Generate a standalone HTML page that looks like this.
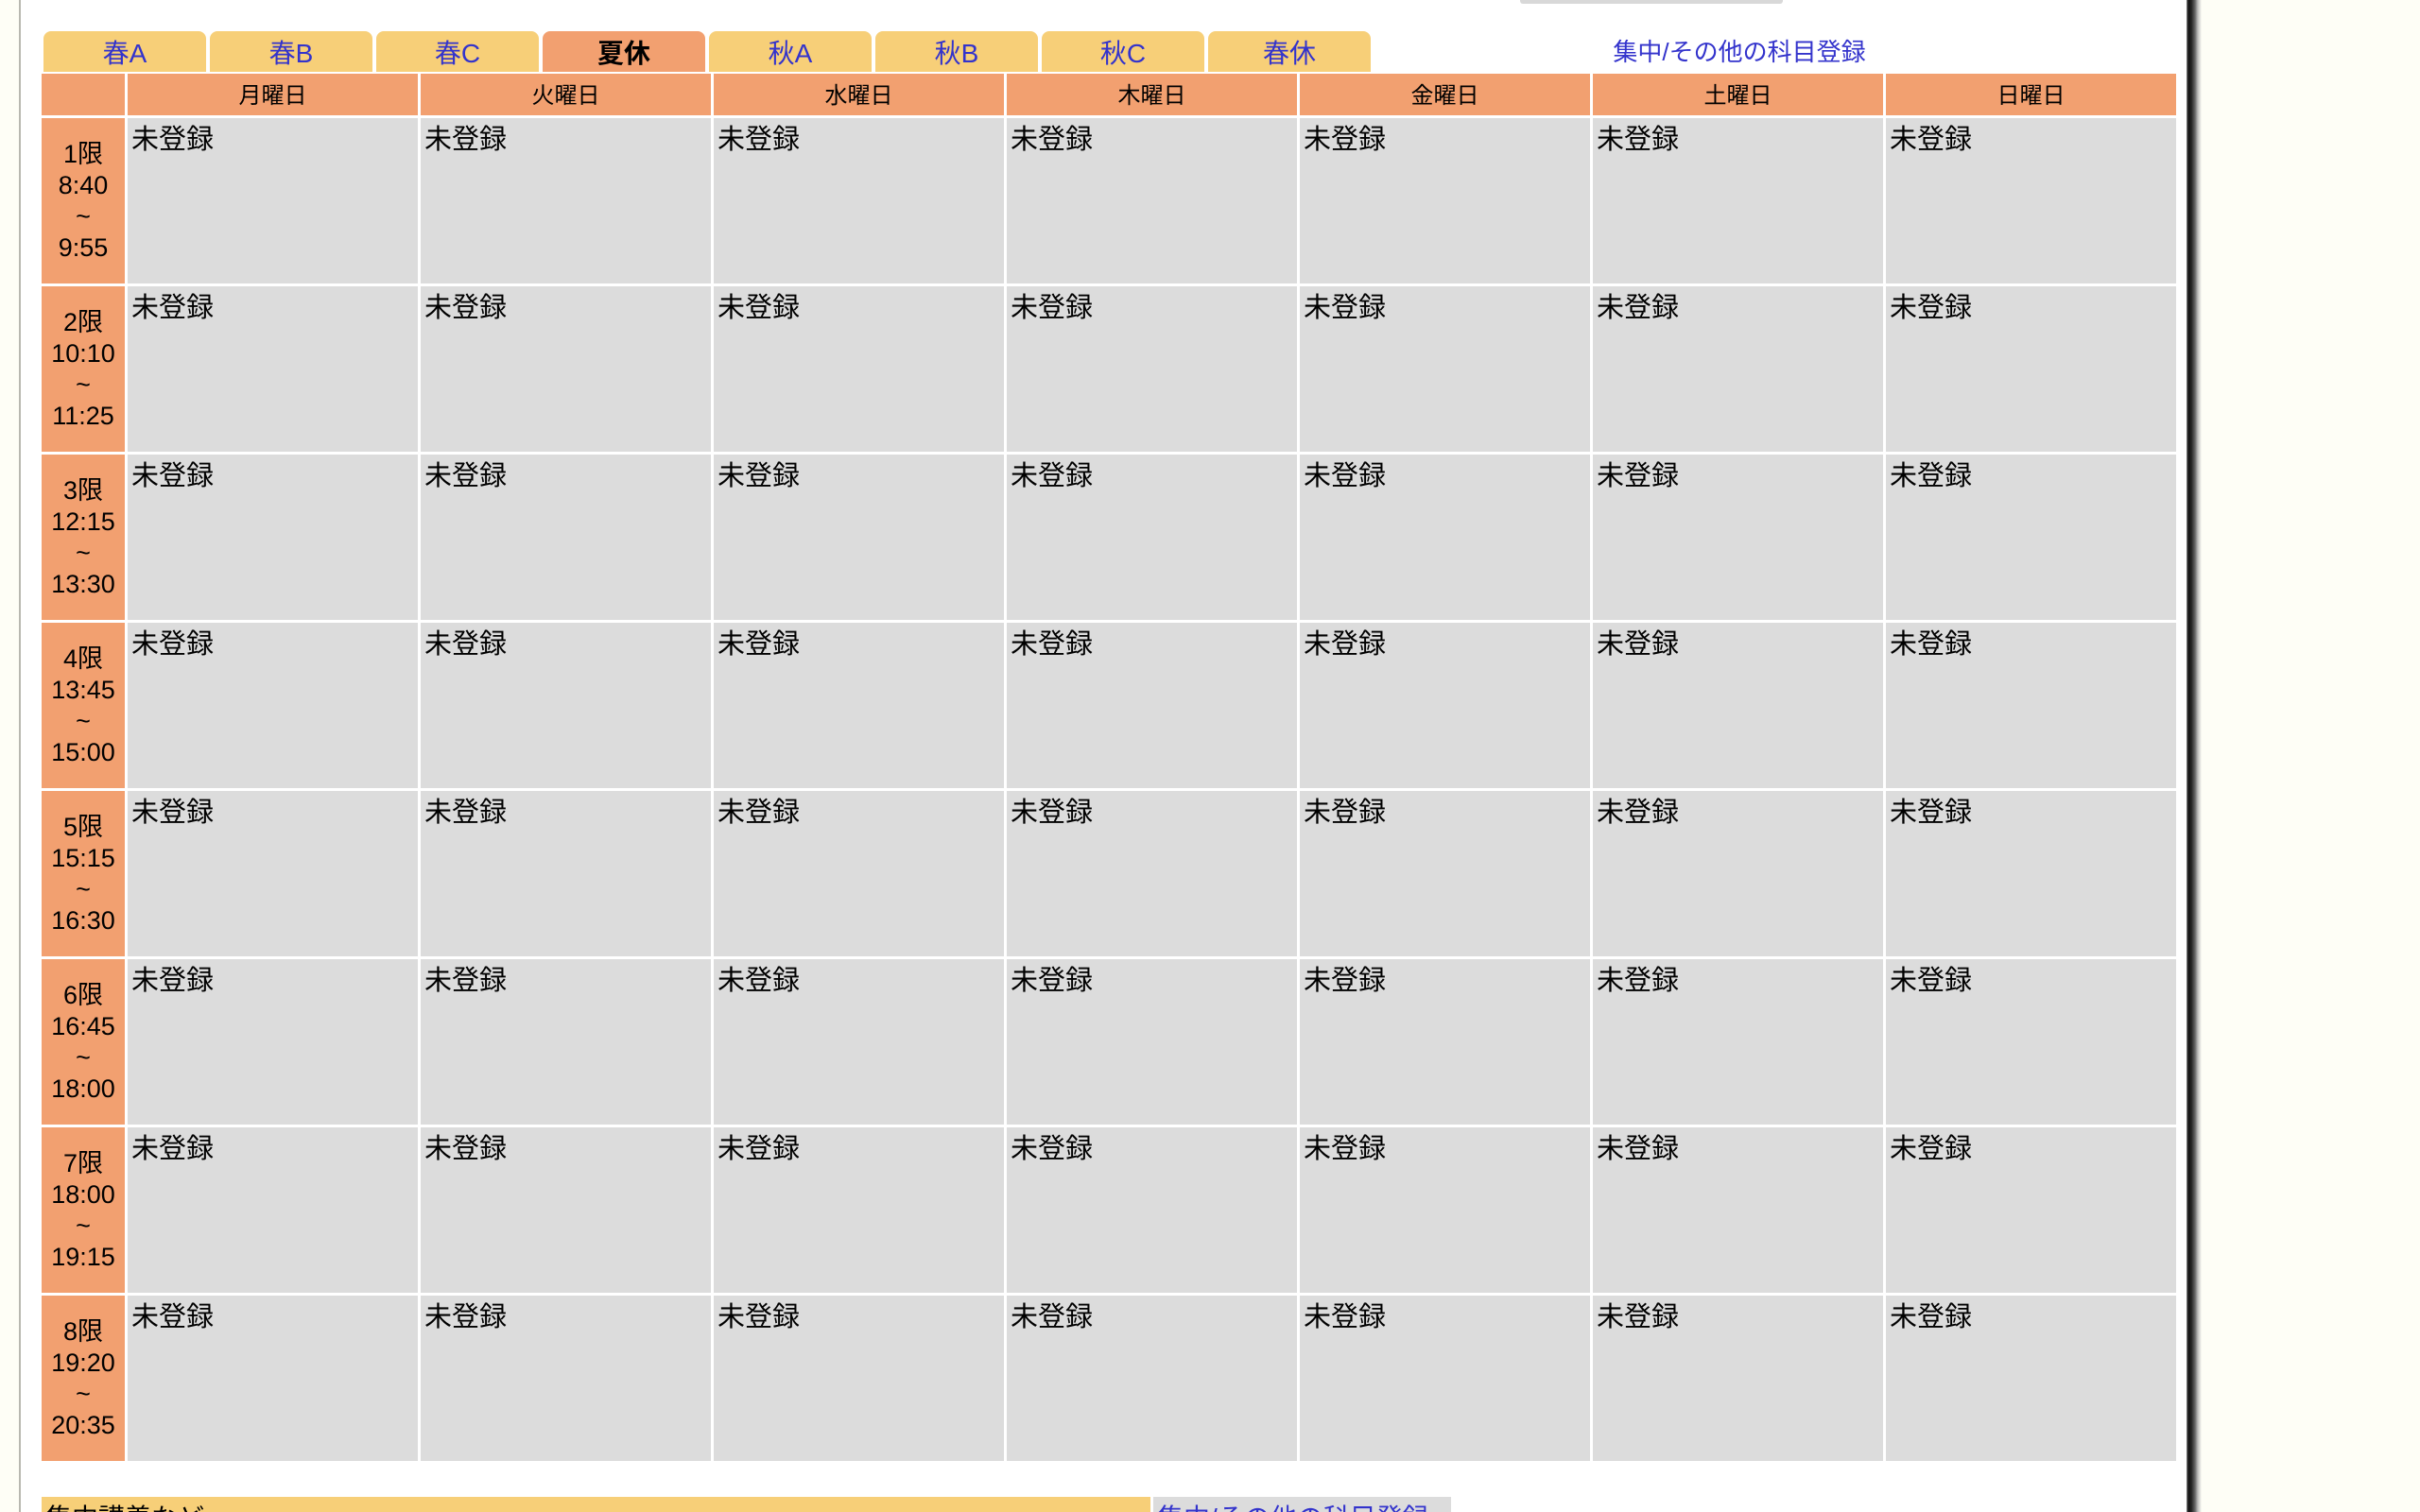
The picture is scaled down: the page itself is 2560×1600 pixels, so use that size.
<!DOCTYPE html>
<html><head><meta charset="utf-8"><style>
*{margin:0;padding:0;box-sizing:border-box}
html,body{width:2560px;height:1600px;overflow:hidden;background:#fefef6;font-family:"Liberation Sans","Noto Sans CJK JP",sans-serif}
#page{position:absolute;left:20px;top:0;width:2293px;height:1600px;background:#fff;border-left:2px solid #b8b8b0}
#shadow{position:absolute;left:2313px;top:0;width:16px;height:1600px;background:linear-gradient(to right,#888 0,#111 2px,#222 5px,#666 9px,#bbb 12px,#fefef6 16px)}
#topbox{position:absolute;left:1608px;top:0;width:278px;height:4px;background:#d8d8d8;border-radius:0 0 3px 3px}
.tab{position:absolute;top:33px;height:43px;width:172px;background:#f7cf78;border-radius:8px 8px 0 0;text-align:center;font-size:28px;line-height:48px;color:#3333cc}
.tab.on{background:#f2a070;color:#000;font-weight:bold}
#link{position:absolute;left:1700px;top:35px;width:280px;text-align:center;font-size:26px;color:#3333cc;line-height:40px}
#grid{position:absolute;left:44px;top:78px;display:grid;grid-template-columns:88px repeat(7,307px);grid-template-rows:44px repeat(8,175px);gap:3px}
.h{background:#f2a070;text-align:center;font-size:24px;line-height:48px;color:#000}
.t{background:#f2a070;text-align:center;font-size:27px;line-height:33px;display:flex;flex-direction:column;justify-content:center;color:#000}
.c{background:#dcdcdc;font-size:29px;line-height:36px;padding:5px 4px;color:#000}
#bar{position:absolute;left:44px;top:1584px;width:1173px;height:16px;overflow:hidden;background:#f7cf78;font-size:28px;line-height:46px;padding-left:4px}
#bar2{position:absolute;left:1220px;top:1584px;width:315px;height:16px;overflow:hidden;background:#dcdcdc;font-size:28px;line-height:46px;padding-left:4px;color:#3333cc}
</style></head><body>
<div id="page"></div><div id="shadow"></div><div id="topbox"></div>
<div class="tab" style="left:46px">春A</div>
<div class="tab" style="left:222px">春B</div>
<div class="tab" style="left:398px">春C</div>
<div class="tab on" style="left:574px">夏休</div>
<div class="tab" style="left:750px">秋A</div>
<div class="tab" style="left:926px">秋B</div>
<div class="tab" style="left:1102px">秋C</div>
<div class="tab" style="left:1278px">春休</div>
<div id="link">集中/その他の科目登録</div>
<div id="grid">
<div class="h"></div><div class="h">月曜日</div><div class="h">火曜日</div><div class="h">水曜日</div><div class="h">木曜日</div><div class="h">金曜日</div><div class="h">土曜日</div><div class="h">日曜日</div>
<div class="t"><div>1限</div><div>8:40</div><div>~</div><div>9:55</div></div><div class="c">未登録</div><div class="c">未登録</div><div class="c">未登録</div><div class="c">未登録</div><div class="c">未登録</div><div class="c">未登録</div><div class="c">未登録</div>
<div class="t"><div>2限</div><div>10:10</div><div>~</div><div>11:25</div></div><div class="c">未登録</div><div class="c">未登録</div><div class="c">未登録</div><div class="c">未登録</div><div class="c">未登録</div><div class="c">未登録</div><div class="c">未登録</div>
<div class="t"><div>3限</div><div>12:15</div><div>~</div><div>13:30</div></div><div class="c">未登録</div><div class="c">未登録</div><div class="c">未登録</div><div class="c">未登録</div><div class="c">未登録</div><div class="c">未登録</div><div class="c">未登録</div>
<div class="t"><div>4限</div><div>13:45</div><div>~</div><div>15:00</div></div><div class="c">未登録</div><div class="c">未登録</div><div class="c">未登録</div><div class="c">未登録</div><div class="c">未登録</div><div class="c">未登録</div><div class="c">未登録</div>
<div class="t"><div>5限</div><div>15:15</div><div>~</div><div>16:30</div></div><div class="c">未登録</div><div class="c">未登録</div><div class="c">未登録</div><div class="c">未登録</div><div class="c">未登録</div><div class="c">未登録</div><div class="c">未登録</div>
<div class="t"><div>6限</div><div>16:45</div><div>~</div><div>18:00</div></div><div class="c">未登録</div><div class="c">未登録</div><div class="c">未登録</div><div class="c">未登録</div><div class="c">未登録</div><div class="c">未登録</div><div class="c">未登録</div>
<div class="t"><div>7限</div><div>18:00</div><div>~</div><div>19:15</div></div><div class="c">未登録</div><div class="c">未登録</div><div class="c">未登録</div><div class="c">未登録</div><div class="c">未登録</div><div class="c">未登録</div><div class="c">未登録</div>
<div class="t"><div>8限</div><div>19:20</div><div>~</div><div>20:35</div></div><div class="c">未登録</div><div class="c">未登録</div><div class="c">未登録</div><div class="c">未登録</div><div class="c">未登録</div><div class="c">未登録</div><div class="c">未登録</div>
</div>
<div id="bar">集中講義など</div>
<div id="bar2">集中/その他の科目登録</div>
</body></html>
